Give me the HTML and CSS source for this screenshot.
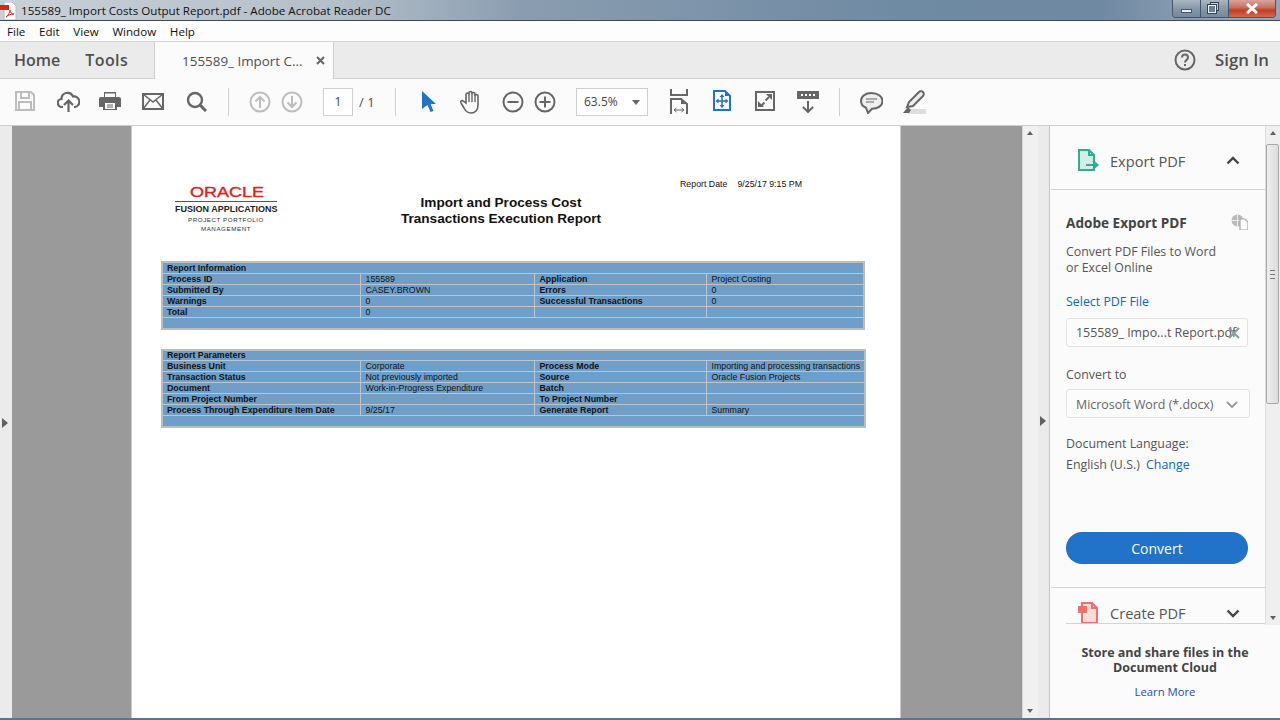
FILE: index.html
```html
<!DOCTYPE html>
<html>
<head>
<meta charset="utf-8">
<link rel="stylesheet" href="styles.css">
<title>155589_ Import Costs Output Report.pdf - Adobe Acrobat Reader DC</title>
</head>
<body>

<header class="titlebar">
  <svg class="app-icon" width="18" height="18" viewBox="0 0 18 18"><path d="M4 0h8l4 4v14H4z" fill="#fff" stroke="#bbb"/><rect x="0" y="3" width="9" height="5" fill="#d8261c"/><path d="M6 15c2-1 4-5 4-7 0 3 2 4 4 4-3 0-6 1-8 3z" fill="none" stroke="#d8261c"/></svg>
  <span class="title-text">155589_ Import Costs Output Report.pdf - Adobe Acrobat Reader DC</span>
  <div class="win-buttons">
    <div class="win-btn win-min"><span class="min-bar"></span></div>
    <div class="win-btn win-max"><span class="max-back"></span><span class="max-front"></span></div>
    <div class="win-btn win-close">
      <svg width="14" height="11" viewBox="0 0 14 11"><path d="M2 1l10 9M12 1L2 10" stroke="#fff" stroke-width="3"/></svg>
    </div>
  </div>
</header>

<nav class="menubar">
  <span>File</span><span>Edit</span><span>View</span><span>Window</span><span>Help</span>
</nav>

<div class="tabbar">
  <div class="tab-link tab-home">Home</div>
  <div class="tab-link tab-tools">Tools</div>
  <div class="doc-tab">
    <span>155589_ Import C...</span>
    <svg width="9" height="9" viewBox="0 0 9 9"><path d="M1 1l7 7M8 1L1 8" stroke="#666" stroke-width="2"/></svg>
  </div>
  <div class="tab-right">
    <svg width="22" height="22" viewBox="0 0 22 22"><circle cx="11" cy="11" r="9.5" fill="none" stroke="#666" stroke-width="2"/><path d="M8 8.500c0-4 6-4 6 0 0 2.500-3 2.500-3 5" fill="none" stroke="#666" stroke-width="2"/><rect x="10" y="15" width="2" height="2" fill="#666"/></svg>
    <span class="sign-in">Sign In</span>
  </div>
</div>

<div class="toolbar">
  <svg class="ic ic-save" width="20" height="20" viewBox="0 0 20 20"><path d="M1 1h15l3 3v15H1z" fill="none" stroke="#bdbdbd" stroke-width="2"/><path d="M6 1v6h8V1M4 19v-8h12v8" fill="none" stroke="#bdbdbd" stroke-width="2"/></svg>
  <svg class="ic ic-upload" width="23" height="22" viewBox="0 0 23 22"><path d="M6 16H5a4 4 0 0 1-.5-8A6 6 0 0 1 16 5.500 5.300 5.300 0 0 1 18 16h-1" fill="none" stroke="#666" stroke-width="2.200"/><path d="M11.500 21V10M7 14l4.500-4.500L16 14" fill="none" stroke="#666" stroke-width="2.200"/></svg>
  <svg class="ic ic-print" width="22" height="20" viewBox="0 0 22 20"><path d="M5 6V1h12v5h3a2 2 0 0 1 2 2v8h-4v3H4v-3H0V8a2 2 0 0 1 2-2z" fill="#666"/><rect x="6" y="2.500" width="10" height="3.500" fill="#fbfbfb"/><rect x="6" y="12" width="10" height="6" fill="#fbfbfb"/><path d="M8 14h6M8 16h6" stroke="#666"/></svg>
  <svg class="ic ic-mail" width="22" height="17" viewBox="0 0 22 17"><rect x="1" y="1" width="20" height="15" fill="none" stroke="#666" stroke-width="2"/><path d="M1 1l10 8 10-8M1 16l7-9M21 16l-7-9" fill="none" stroke="#666" stroke-width="1.500"/></svg>
  <svg class="ic ic-search" width="21" height="21" viewBox="0 0 21 21"><circle cx="9" cy="9" r="7" fill="none" stroke="#666" stroke-width="2.400"/><path d="M14 14l6 6" stroke="#666" stroke-width="3"/></svg>
  <span class="sep sep-a"></span>
  <svg class="ic ic-up" width="22" height="22" viewBox="0 0 22 22"><circle cx="11" cy="11" r="9.500" fill="none" stroke="#bdbdbd" stroke-width="2"/><path d="M11 17V6M6.500 10.500L11 6l4.500 4.500" fill="none" stroke="#bdbdbd" stroke-width="2"/></svg>
  <svg class="ic ic-down" width="22" height="22" viewBox="0 0 22 22"><circle cx="11" cy="11" r="9.500" fill="none" stroke="#bdbdbd" stroke-width="2"/><path d="M11 5v11M6.500 11.500L11 16l4.500-4.500" fill="none" stroke="#bdbdbd" stroke-width="2"/></svg>
  <span class="page-box">1</span>
  <span class="page-total">/ 1</span>
  <span class="sep sep-b"></span>
  <svg class="ic ic-arrow" width="15" height="21" viewBox="0 0 15 21"><path d="M1 0l14 13H9.500l3 7-3 1-3-7L1 18z" fill="#2172c9"/></svg>
  <svg class="ic ic-hand" width="24" height="25" viewBox="0 0 24 25"><path d="M7 13V4.500a1.400 1.400 0 0 1 3 0V3a1.400 1.400 0 0 1 3 0v1a1.400 1.400 0 0 1 3 0v2a1.400 1.400 0 0 1 3 0v9c0 5-3 8-7 8-3 0-5-1-7-5l-3-5c-1-2 1-3 2-2z" fill="none" stroke="#666" stroke-width="1.600"/><path d="M10 4v8M13 3v9M16 4v8" stroke="#666" stroke-width="1.400"/></svg>
  <svg class="ic ic-minus" width="22" height="22" viewBox="0 0 22 22"><circle cx="11" cy="11" r="9.500" fill="none" stroke="#666" stroke-width="2"/><path d="M5.500 11h11" stroke="#666" stroke-width="2"/></svg>
  <svg class="ic ic-plus" width="22" height="22" viewBox="0 0 22 22"><circle cx="11" cy="11" r="9.500" fill="none" stroke="#666" stroke-width="2"/><path d="M5.500 11h11M11 5.500v11" stroke="#666" stroke-width="2"/></svg>
  <div class="zoom-box"><span>63.5%</span><i class="caret"></i></div>
  <svg class="ic ic-fit" width="18" height="25" viewBox="0 0 18 25"><path d="M1 0v6h16V0" fill="none" stroke="#666" stroke-width="2"/><path d="M1 25V10h10l6 5v10" fill="none" stroke="#666" stroke-width="2"/><path d="M11 10v5h6z" fill="#666"/><path d="M4 21h10M4 21l2.500-2M4 21l2.500 2M14 21l-2.500-2M14 21l-2.500 2" fill="none" stroke="#666"/></svg>
  <svg class="ic ic-move" width="18" height="21" viewBox="0 0 18 21"><path d="M1 1h11l5 5v14H1z" fill="#fff" stroke="#2172c9" stroke-width="2"/><path d="M12 1v5h5z" fill="#2172c9"/><path d="M9 6v10M4 11h10" stroke="#2172c9" stroke-width="1.500"/><path d="M9 4l-2.500 3h5zM9 18l-2.500-3h5zM2.500 11l3-2.500v5zM15.500 11l-3-2.500v5z" fill="#2172c9"/></svg>
  <svg class="ic ic-full" width="20" height="21" viewBox="0 0 20 21"><rect x="1" y="2" width="18" height="18" fill="none" stroke="#666" stroke-width="2"/><path d="M10.500 10.500L14 7M9.500 12.500L6 16" stroke="#666" stroke-width="2"/><path d="M11 4h6v6zM3 11l6 6H3z" fill="#666"/></svg>
  <svg class="ic ic-tools" width="22" height="22" viewBox="0 0 22 22"><rect x="0" y="0" width="22" height="8" fill="#666"/><path d="M4 4h2M8 4h2M12 4h2M16 4h2" stroke="#fff" stroke-width="2"/><path d="M11 10v11M6 16l5 5 5-5" fill="none" stroke="#666" stroke-width="2"/></svg>
  <span class="sep sep-c"></span>
  <svg class="ic ic-comment" width="23" height="23" viewBox="0 0 23 23"><path d="M11.500 2C5.500 2 1 5.300 1 10c0 3 2 5.500 5 6.700L8 22l4-4.200c6 0 10.500-3.300 10.500-7.800S17.500 2 11.500 2z" fill="#eee" stroke="#666" stroke-width="2"/><path d="M6 8h11M6 11h8" stroke="#666"/></svg>
  <svg class="ic ic-pen" width="23" height="24" viewBox="0 0 23 24"><rect x="5" y="19" width="18" height="5" fill="#ddd"/><path d="M4 17l2-5L16 2c1-1 3-1 4 0s1 3 0 4L10 16z" fill="#eee" stroke="#666" stroke-width="2"/><path d="M0 23l5-6 3 3-2 3z" fill="#666"/></svg>
</div>

<main class="workspace">
  <div class="edge-left"></div>
  <div class="viewer">
    <section class="pdf-page">
      <div class="date-line"><span>Report Date</span><span>9/25/17 9:15 PM</span></div>
      <div class="report-head">
        <div class="logo">
          <svg class="oracle-word" width="76" height="14" viewBox="0 0 76 14">
            <text x="2" y="12" class="oracle-text" textLength="74" lengthAdjust="spacingAndGlyphs">ORACLE</text>
          </svg>
          <div class="logo-rule"></div>
          <div class="logo-main">FUSION APPLICATIONS</div>
          <div class="logo-sub">PROJECT PORTFOLIO</div>
          <div class="logo-sub">MANAGEMENT</div>
        </div>
        <h1 class="report-title">Import and Process Cost<br>Transactions Execution Report</h1>
      </div>

      <table class="report-table">
        <colgroup><col class="col-a"><col class="col-b"><col class="col-c"><col class="col-d"></colgroup>
        <tr><th colspan="4">Report Information</th></tr>
        <tr><th>Process ID</th><td>155589</td><th>Application</th><td>Project Costing</td></tr>
        <tr><th>Submitted By</th><td>CASEY.BROWN</td><th>Errors</th><td>0</td></tr>
        <tr><th>Warnings</th><td>0</td><th>Successful Transactions</th><td>0</td></tr>
        <tr><th>Total</th><td>0</td><th></th><td></td></tr>
        <tr class="spacer"><td colspan="4"></td></tr>
      </table>

      <table class="report-table second">
        <colgroup><col class="col-a"><col class="col-b"><col class="col-c"><col class="col-d"></colgroup>
        <tr class="top-row"><th colspan="4">Report Parameters</th></tr>
        <tr><th>Business Unit</th><td>Corporate</td><th>Process Mode</th><td>Importing and processing transactions</td></tr>
        <tr><th>Transaction Status</th><td>Not previously imported</td><th>Source</th><td>Oracle Fusion Projects</td></tr>
        <tr><th>Document</th><td>Work-in-Progress Expenditure</td><th>Batch</th><td></td></tr>
        <tr><th>From Project Number</th><td></td><th>To Project Number</th><td></td></tr>
        <tr><th>Process Through Expenditure Item Date</th><td>9/25/17</td><th>Generate Report</th><td>Summary</td></tr>
        <tr class="spacer"><td colspan="4"></td></tr>
      </table>
    </section>
    <i class="tri tri-left"></i>
  </div>
  <div class="scroll scroll-doc">
    <i class="sc-up"></i><i class="sc-down"></i>
  </div>
  <div class="strip"><i class="tri"></i></div>

  <aside class="panel">
    <div class="panel-scroll-area">
      <div class="panel-body">
        <div class="acc-head export-acc">
          <svg width="21" height="23" viewBox="0 0 21 23"><path d="M1 1h10l5 5v15H1z" fill="#d3eee7" stroke="#2fae92" stroke-width="2"/><path d="M11 1v5h5" fill="none" stroke="#2fae92" stroke-width="2"/><path d="M8 16h10M15 12l4.500 4-4.500 4" fill="none" stroke="#2fae92" stroke-width="2"/></svg>
          <span class="acc-title">Export PDF</span>
          <svg class="chev" width="14" height="9" viewBox="0 0 14 9"><path d="M1.500 7.500L7 2l5.500 5.500" fill="none" stroke="#444" stroke-width="2.400"/></svg>
        </div>
        <div class="export">
          <div class="export-head">
            <b>Adobe Export PDF</b>
            <svg width="17" height="16" viewBox="0 0 17 16"><circle cx="6.500" cy="6.500" r="6" fill="#bbb"/><path d="M0 6.500h13M6.500 0v13" stroke="#eee"/><path d="M9 5h5l3 3v8H9z" fill="#fbfbfb" stroke="#aaa" stroke-width="1.200"/></svg>
          </div>
          <p class="desc">Convert PDF Files to Word<br>or Excel Online</p>
          <p class="label-blue">Select PDF File</p>
          <div class="field file-field">
            <span>155589_ Impo...t Report.pdf</span>
            <svg width="12" height="12" viewBox="0 0 12 12"><path d="M1 1l10 10M11 1L1 11" stroke="#999" stroke-width="2.200"/></svg>
          </div>
          <p class="label-plain">Convert to</p>
          <div class="field select-field">
            <span>Microsoft Word (*.docx)</span>
            <svg width="12" height="7" viewBox="0 0 12 7"><path d="M1 1l5 5 5-5" fill="none" stroke="#999" stroke-width="1.800"/></svg>
          </div>
          <p class="lang-label">Document Language:</p>
          <p class="lang-value">English (U.S.) <a>Change</a></p>
          <button class="convert">Convert</button>
        </div>
        <div class="acc-head create">
          <svg width="20" height="22" viewBox="0 0 20 22"><path d="M4 1h10l5 5v15H4z" fill="#fbdcd8" stroke="#ef7268" stroke-width="2"/><path d="M14 1v5h5" fill="none" stroke="#ef7268" stroke-width="2"/><rect x="0" y="4" width="9" height="7" fill="#ef7268"/></svg>
          <span class="acc-title">Create PDF</span>
          <svg class="chev" width="14" height="9" viewBox="0 0 14 9"><path d="M1.500 1.500L7 7l5.500-5.500" fill="none" stroke="#444" stroke-width="2.400"/></svg>
        </div>
      </div>
      <div class="scroll scroll-panel">
        <i class="sc-up"></i><i class="sc-thumb"></i><i class="sc-down"></i>
      </div>
    </div>
    <div class="cloud">
      <b>Store and share files in the<br>Document Cloud</b>
      <a>Learn More</a>
    </div>
  </aside>
</main>

</body>
</html>
```

FILE: styles.css
```css
html, body { margin: 0; padding: 0; }

body {
  width: 1280px;
  height: 720px;
  overflow: hidden;
  font-family: "Open Sans", "Noto Sans", sans-serif;
  color: #505050;
  background: #fbfbfb;
  display: flex;
  flex-direction: column;
}

p { margin: 0; }

/* window chrome */
.titlebar {
  height: 21px;
  flex: none;
  display: flex;
  align-items: center;
  position: relative;
  background: linear-gradient(90deg, #c9d0d8 0, #b4bfca 340px, #8a9db0 520px, #6f8aa3 900px, #7089a2 1100px, #93a6b8 1240px);
  border-bottom: 1px solid #3c4a58;
  box-sizing: border-box;
}
.app-icon { margin: 1px 3px 0 0; flex: none; }
.title-text {
  font: 11.600px "Open Sans", sans-serif;
  color: #111;
  white-space: nowrap;
}
.win-buttons {
  position: absolute;
  right: 4px;
  top: 0;
  display: flex;
  height: 17px;
  border: 1px solid #46566a;
  border-top: 0;
  border-radius: 0 0 4px 4px;
  overflow: hidden;
}
.win-btn {
  height: 17px;
  display: flex;
  align-items: center;
  justify-content: center;
  position: relative;
  background: linear-gradient(#a9b6c4, #8798aa 50%, #75889c);
  border-right: 1px solid #46566a;
}
.win-min { width: 27px; }
.win-max { width: 27px; }
.win-close {
  width: 46px;
  border-right: 0;
  background: linear-gradient(#d8a59c, #c5705f 45%, #c63a20 60%, #d06a50);
}
.min-bar { width: 11px; height: 4px; background: #eef1f4; margin-top: 4px; border: 1px solid #46566a; box-sizing: border-box; }
.max-back { position: absolute; left: 9px; top: 2px; width: 9px; height: 9px; border: 1px solid #36414e; background: #c8d0d8; box-sizing: border-box; }
.max-front { position: absolute; left: 6px; top: 4px; width: 10px; height: 10px; border: 2px solid #eef1f4; outline: 1px solid #36414e; outline-offset: -1px; background: #6d7f92; box-sizing: border-box; }

.menubar {
  height: 21px;
  box-sizing: border-box;
  flex: none;
  display: flex;
  align-items: center;
  gap: 13.700px;
  padding-left: 7px;
  font-size: 11.600px;
  color: #111;
  background: #fdfdfd;
  border-bottom: 1px solid #d4d4d4;
}

/* tabs */
.tabbar {
  height: 37px;
  box-sizing: border-box;
  flex: none;
  display: flex;
  align-items: center;
  background: #ebebeb;
  border-bottom: 1px solid #cfcfcf;
}
.tab-link {
  font-size: 16px;
  font-weight: 600;
  color: #505050;
}
.tab-home { margin-left: 14px; }
.tab-tools { margin-left: 25px; margin-right: 26px; letter-spacing: .4px; }
.doc-tab {
  width: 180px;
  height: 37px;
  box-sizing: border-box;
  align-self: flex-start;
  background: #fbfbfb;
  border-left: 1px solid #cfcfcf;
  border-right: 1px solid #cfcfcf;
  display: flex;
  align-items: center;
  padding: 0 8px 0 27px;
  justify-content: space-between;
  font-size: 13.400px;
  color: #505050;
  white-space: nowrap;
}
.tab-right {
  margin-left: auto;
  display: flex;
  align-items: center;
  gap: 19px;
  padding-right: 11px;
}
.sign-in { font-size: 16.800px; font-weight: 600; line-height: 20px; margin-top: -1px; }

/* toolbar */
.toolbar {
  height: 47px;
  flex: none;
  position: relative;
  background: #fbfbfb;
  border-bottom: 1px solid #cfcfcf;
  box-sizing: border-box;
}
.ic { position: absolute; }
.ic-save { left: 15px; top: 12px; }
.ic-upload { left: 57px; top: 12px; }
.ic-print { left: 99px; top: 12px; }
.ic-mail { left: 142px; top: 14px; }
.ic-search { left: 186px; top: 12px; }
.ic-up { left: 249px; top: 12px; }
.ic-down { left: 281px; top: 12px; }
.ic-arrow { left: 421px; top: 12px; }
.ic-hand { left: 459px; top: 11px; }
.ic-minus { left: 502px; top: 12px; }
.ic-plus { left: 534px; top: 12px; }
.ic-fit { left: 670px; top: 10px; }
.ic-move { left: 713px; top: 11px; }
.ic-full { left: 755px; top: 11px; }
.ic-tools { left: 797px; top: 12px; }
.ic-comment { left: 860px; top: 12px; }
.ic-pen { left: 903px; top: 11px; }
.sep { position: absolute; top: 9px; width: 1px; height: 28px; background: #cfcfcf; }
.sep-a { left: 228px; }
.sep-b { left: 395px; }
.sep-c { left: 839px; }
.page-box {
  position: absolute;
  left: 323px;
  top: 9px;
  width: 30px;
  height: 28px;
  box-sizing: border-box;
  border: 1px solid #cfcfcf;
  background: #fff;
  font-size: 12px;
  line-height: 26px;
  text-align: center;
  color: #444;
}
.page-total { position: absolute; left: 359px; top: 14px; font-size: 13px; color: #505050; }
.zoom-box {
  position: absolute;
  left: 576px;
  top: 9px;
  width: 72px;
  height: 28px;
  box-sizing: border-box;
  border: 1px solid #cfcfcf;
  background: #fff;
  font-size: 12px;
  line-height: 26px;
  padding-left: 7px;
  color: #444;
}
.caret {
  position: absolute;
  right: 7px;
  top: 11px;
  border: 4px solid transparent;
  border-top: 5px solid #666;
  border-bottom: 0;
}

/* document area */
.workspace {
  flex: 1;
  display: flex;
  min-height: 0;
  border-bottom: 2px solid #5b7590;
}
.edge-left {
  width: 12px;
  flex: none;
  background: #ebebeb;
}
.viewer {
  width: 1010px;
  flex: none;
  background: #9a9a9a;
  position: relative;
  padding-left: 119px;
  box-sizing: border-box;
}
.pdf-page {
  width: 770px;
  height: 100%;
  box-sizing: border-box;
  background: #fff;
  border-left: 1px solid #c8c8c8;
  border-right: 1px solid #c8c8c8;
  padding: 52px 0 0 29px;
  position: relative;
}
.date-line {
  position: absolute;
  top: 53px;
  left: 548px;
  display: flex;
  gap: 10px;
  font: 8.800px "Liberation Sans", Arial, sans-serif;
  color: #111;
}
.report-head {
  display: flex;
  height: 83px;
  padding-top: 7px;
  box-sizing: border-box;
}
.logo {
  width: 102px;
  margin-left: 14px;
  text-align: center;
  font-family: "Liberation Sans", Arial, sans-serif;
  color: #333;
  flex: none;
}
.oracle-word { display: block; margin: 0 auto; }
.oracle-text { font: 400 14px "Liberation Sans", Arial, sans-serif; fill: #e3201b; stroke: #e3201b; stroke-width: .35px; }
.logo-rule { height: 1px; background: #555; margin: 2px 0; }
.logo-main { font-size: 9px; font-weight: 700; line-height: 10px; color: #222; white-space: nowrap; margin-bottom: 1px; }
.logo-sub { font-size: 6.200px; line-height: 9px; letter-spacing: .58px; white-space: nowrap; }
.report-title {
  margin: 10px 0 0 94px;
  width: 260px;
  font: 700 13.600px/16px "Liberation Sans", Arial, sans-serif;
  color: #111;
  text-align: center;
  white-space: nowrap;
}

.report-table {
  width: 704px;
  table-layout: fixed;
  border-collapse: collapse;
  border: 2px solid #bdbdbd;
  background: #6f9fc8;
  font: 8.800px/10px "Liberation Sans", Arial, sans-serif;
  color: #111;
}
.report-table.second { margin-top: 19px; width: 705px; }
.col-a { width: 198px; }
.col-b { width: 174px; }
.col-c { width: 172px; }
.report-table th, .report-table td {
  height: 10px;
  padding: 0 0 0 5px;
  border: 1px solid #bcc6cc;
  text-align: left;
  white-space: nowrap;
  overflow: hidden;
  box-sizing: content-box;
}
.report-table tr > :first-child { padding-left: 4px; }
.report-table th { font-weight: 700; }
.report-table td { font-weight: 400; color: #111; }
.report-table .spacer td { height: 10px; }
.report-table .top-row th { height: 9px; line-height: 9px; }

.tri {
  display: block;
  width: 0;
  height: 0;
  border: 5px solid transparent;
  border-left: 6px solid #606060;
  border-right: 0;
}
.tri-left { position: absolute; left: -10px; top: 292px; }

.scroll { background: #f0f0f0; position: relative; flex: none; }
.scroll-doc { width: 16px; border-left: 1px solid #dadada; box-sizing: border-box; }
.sc-up, .sc-down {
  position: absolute;
  left: 4px;
  width: 0;
  height: 0;
  border: 3.500px solid transparent;
}
.sc-up { top: 5px; border-bottom: 4px solid #606060; border-top: 0; }
.sc-down { bottom: 5px; border-top: 4px solid #606060; border-bottom: 0; }
.strip {
  width: 12px;
  flex: none;
  background: #ebebeb;
  border-right: 1px solid #c4c4c4;
  display: flex;
  align-items: center;
  padding: 0 0 2px 2px;
  box-sizing: border-box;
}

/* right panel */
.panel {
  flex: 1;
  display: flex;
  flex-direction: column;
  background: #fbfbfb;
  min-width: 0;
}
.panel-scroll-area {
  height: 499px;
  flex: none;
  display: flex;
}
.panel-body {
  width: 215px;
  flex: none;
  overflow: hidden;
  box-sizing: border-box;
  padding-left: 1px;
}
.scroll-panel { flex: 1; background: #efefef; border-left: 1px solid #ddd; }
.sc-thumb {
  position: absolute;
  left: 0;
  right: 1px;
  top: 18px;
  height: 260px;
  background: linear-gradient(90deg, #eee, #ddd);
  border: 1px solid #a8a8a8;
  border-radius: 2px;
  box-sizing: border-box;
}
.sc-thumb::after {
  content: "";
  position: absolute;
  left: 3px;
  right: 3px;
  top: 125px;
  height: 7px;
  border-top: 1px solid #777;
  border-bottom: 1px solid #777;
  background: linear-gradient(#777, #777) center / 100% 1px no-repeat;
}
.acc-head {
  height: 64px;
  box-sizing: border-box;
  display: flex;
  align-items: center;
  padding: 0 25px 0 27px;
  border-bottom: 1px solid #d4d4d4;
}
.export-acc { padding-top: 6px; }
.acc-head .chev { margin-left: auto; }
.acc-title { font-size: 14.600px; color: #555; margin-left: 11px; }
.acc-head.create {
  height: 36px;
  align-items: flex-start;
  padding: 14px 25px 0 12px;
  margin-left: 15px;
  border-bottom: 1px solid #d4d4d4;
  overflow: hidden;
  position: relative;
}
.acc-head.create svg { flex: none; }
.acc-head.create .chev { margin-top: 7px; }
.acc-head.create .acc-title { line-height: 20px; margin: 1px 0 0 12px; }

.export {
  padding: 0 17px 0 15px;
  height: 398px;
  box-sizing: border-box;
  position: relative;
  font-size: 12.400px;
  color: #555;
  border-bottom: 1px solid #d4d4d4;
}
.export-head {
  display: flex;
  justify-content: space-between;
  padding-top: 24px;
  height: 48px;
  box-sizing: border-box;
}
.export-head b { font-size: 13.600px; line-height: 18px; color: #444; font-weight: 700; }
.desc { line-height: 16px; margin-top: 6px; }
.label-blue { color: #0f68b8; margin-top: 17px; line-height: 17px; }
.label-plain { margin-top: 19px; line-height: 17px; }
.field {
  height: 29px;
  box-sizing: border-box;
  display: flex;
  align-items: center;
  justify-content: space-between;
  border: 1px solid #e2e2e2;
  border-radius: 3px;
  background: #fcfcfc;
  margin-top: 8px;
  padding: 0 8px 0 9px;
  white-space: nowrap;
  position: relative;
}
.file-field { width: 182px; overflow: hidden; }
.file-field svg { position: absolute; right: 7px; top: 8px; }
.select-field { width: 184px; margin-top: 6px; color: #666; padding: 2px 11px 0 9px; }
.lang-label { margin-top: 17px; line-height: 17px; }
.lang-value { margin-top: 4px; line-height: 17px; }
.lang-value a { color: #0f68b8; margin-left: 3px; }
.convert {
  position: absolute;
  left: 15px;
  top: 342px;
  width: 182px;
  height: 32px;
  border: 0;
  border-radius: 16px;
  background: #2073c9;
  color: #fff;
  font: 14px "Open Sans", sans-serif;
}

.cloud {
  flex: 1;
  text-align: center;
  padding-top: 20px;
  font-size: 12.500px;
  box-sizing: border-box;
}
.cloud b { display: block; line-height: 15px; font-weight: 700; color: #444; }
.cloud a { display: block; margin-top: 9px; font-size: 11.300px; color: #2b4bb5; }
```
